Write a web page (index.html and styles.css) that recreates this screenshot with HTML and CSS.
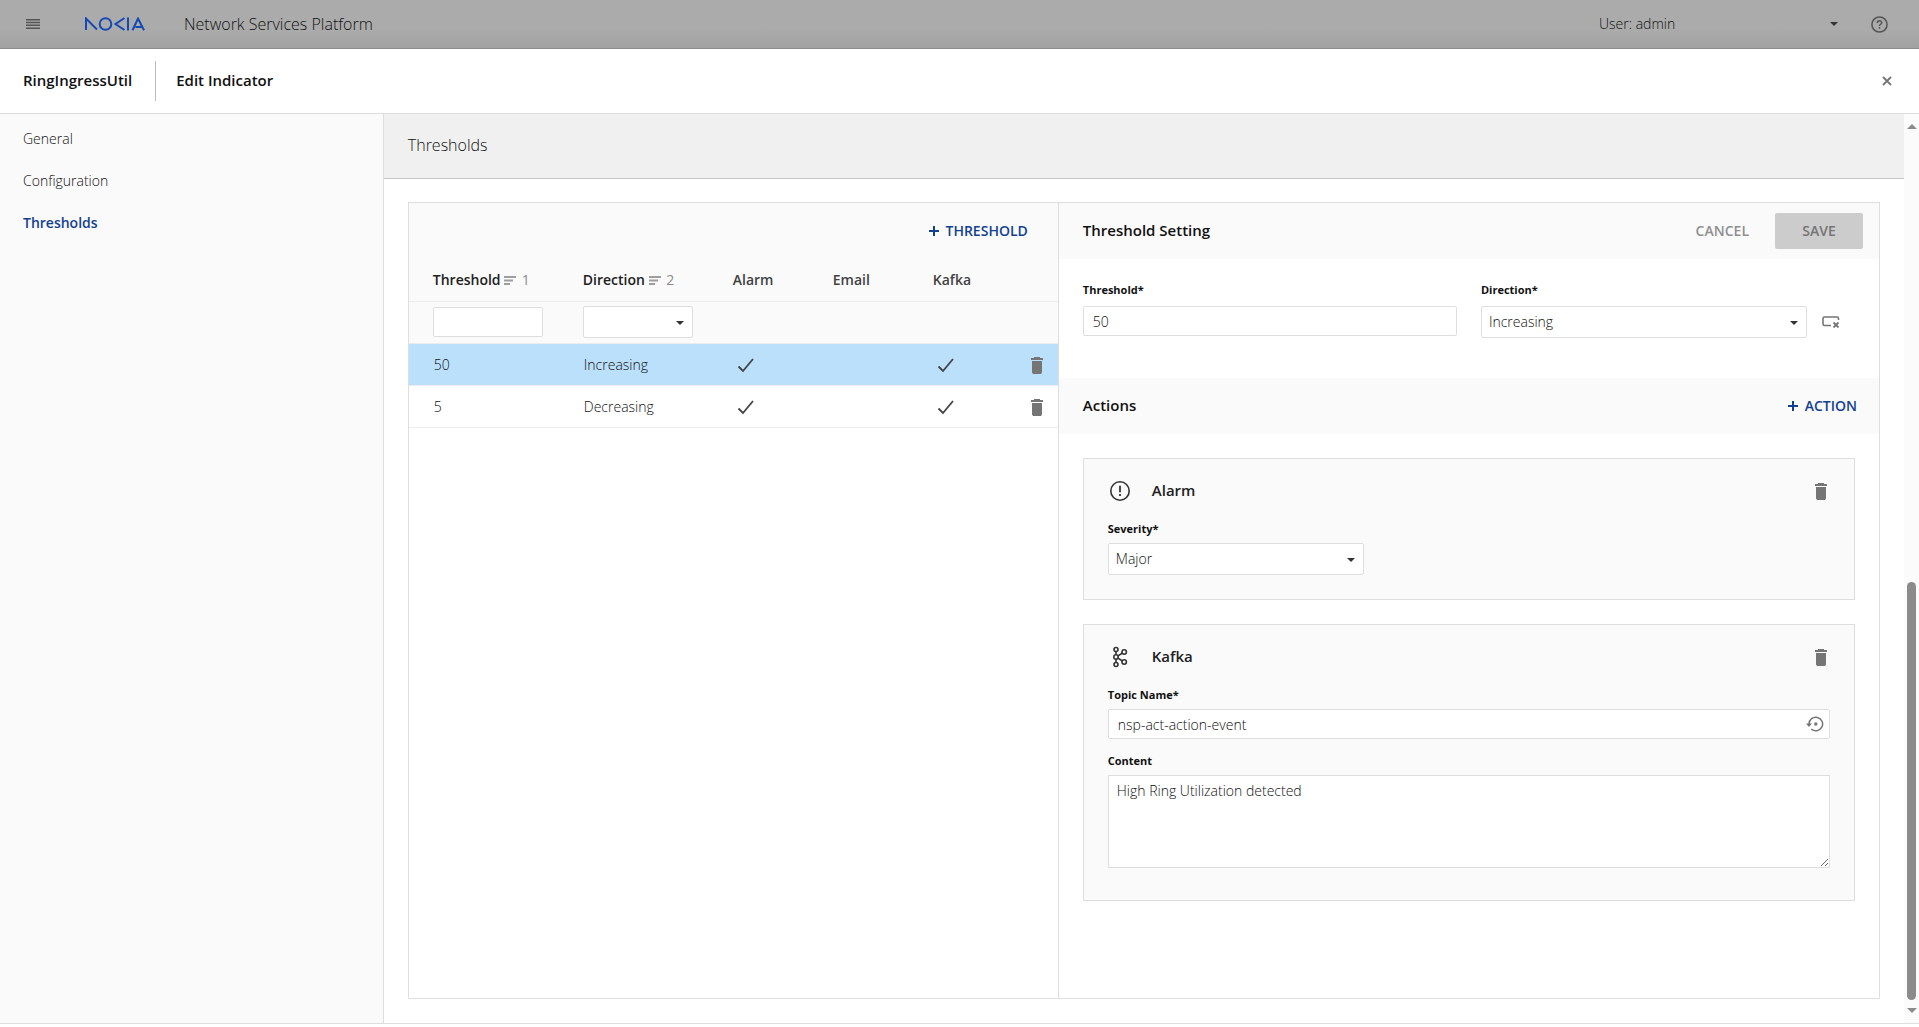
FILE: index.html
```
<!DOCTYPE html>
<html lang="en">
<head>
    <meta charset="UTF-8">
    <meta name="viewport" content="width=device-width, initial-scale=1.0">
    <title>Network Services Platform - Edit Indicator</title>
    <link rel="stylesheet" href="styles.css">
</head>
<body>
    <!-- shared icons -->
    <svg class="sprite" aria-hidden="true">
        <symbol id="icon-trash" viewBox="0 0 12 17">
            <path d="M3 0h6v1h3v2H0V1h3zM1 4h10v11.500L10 17H2l-1-1.500z"/>
        </symbol>
        <symbol id="icon-plus" viewBox="0 0 10 10">
            <path d="M4 0h2v4h4v2H6v4H4V6H0V4h4z"/>
        </symbol>
        <symbol id="icon-check" viewBox="0 0 18 16">
            <path d="M1.500 9.500l4.500 4.500L16 2" fill="none" stroke="currentColor" stroke-width="1.800"/>
        </symbol>
        <symbol id="icon-sort" viewBox="0 0 12 9">
            <path d="M0 0h12v2H0zM0 3.500h9v2H0zM0 7h6v2H0z"/>
        </symbol>
    </svg>

    <header class="topbar">
        <button class="icon-btn menu-btn" aria-label="Menu">
            <svg width="14" height="10" viewBox="0 0 14 10"><path d="M0 0h14v1.500H0zM0 2.800h14v1.500H0zM0 5.600h14v1.500H0zM0 8.400h14v1.500H0z"/></svg>
        </button>
        <svg class="logo" width="60" height="14" viewBox="0 0 60 14" role="img" aria-label="Nokia">
            <g fill="none" stroke="currentColor" stroke-width="2">
                <path d="M1 13V1.500L12 12.500"/>
                <circle cx="20.500" cy="7" r="5.800"/>
                <path d="M39.500 1L30.500 7l9 6M43 .500v13M47.500 13.200L53 1.500l6 11.700M50.500 10h7"/>
            </g>
        </svg>
        <span class="app-name">Network Services Platform</span>
        <button class="user-menu">User: admin<span class="caret"></span></button>
        <button class="icon-btn" aria-label="Help">
            <svg width="17" height="17" viewBox="0 0 17 17">
                <circle cx="8.500" cy="8.500" r="7.600" fill="none" stroke="currentColor" stroke-width="1.500"/>
                <path d="M6.300 7c0-3 4.400-3 4.400-.300 0 1.500-2.200 1.600-2.200 3.200M8.500 11v1.700" fill="none" stroke="currentColor" stroke-width="1.500"/>
            </svg>
        </button>
    </header>

    <main class="dialog">
        <div class="dialog-header">
            <h1>RingIngressUtil</h1>
            <h2>Edit Indicator</h2>
            <button class="icon-btn close-btn" aria-label="Close">
                <svg width="10" height="10" viewBox="0 0 10 10"><path d="M1 1l8 8M9 1L1 9" fill="none" stroke="currentColor" stroke-width="1.800"/></svg>
            </button>
        </div>

        <div class="dialog-body">
            <nav class="sidebar">
                <a href="#general">General</a>
                <a href="#configuration">Configuration</a>
                <a href="#thresholds" class="active">Thresholds</a>
            </nav>

            <section class="content" id="thresholds">
                <h3 class="section-title">Thresholds</h3>

                <div class="panel">
                    <div class="list">
                        <div class="toolbar list-toolbar">
                            <button class="link-btn"><svg width="10" height="10"><use href="#icon-plus"/></svg>THRESHOLD</button>
                        </div>
                        <table>
                            <thead>
                                <tr>
                                    <th class="col-wide sorted">Threshold <svg width="12" height="9"><use href="#icon-sort"/></svg> <span class="order">1</span></th>
                                    <th class="col-wide sorted">Direction <svg width="12" height="9"><use href="#icon-sort"/></svg> <span class="order">2</span></th>
                                    <th class="col">Alarm</th>
                                    <th class="col">Email</th>
                                    <th class="col">Kafka</th>
                                    <th></th>
                                </tr>
                                <tr class="filters">
                                    <td><input type="text" class="field" aria-label="Filter threshold"></td>
                                    <td>
                                        <div class="select">
                                            <select aria-label="Filter direction">
                                                <option></option>
                                                <option>Increasing</option>
                                                <option>Decreasing</option>
                                            </select>
                                        </div>
                                    </td>
                                    <td></td>
                                    <td></td>
                                    <td></td>
                                    <td></td>
                                </tr>
                            </thead>
                            <tbody>
                                <tr class="selected">
                                    <td>50</td>
                                    <td>Increasing</td>
                                    <td class="tick"><svg width="18" height="16"><use href="#icon-check"/></svg></td>
                                    <td></td>
                                    <td class="tick"><svg width="18" height="16"><use href="#icon-check"/></svg></td>
                                    <td class="remove"><button class="icon-btn" aria-label="Delete"><svg width="12" height="17"><use href="#icon-trash"/></svg></button></td>
                                </tr>
                                <tr>
                                    <td>5</td>
                                    <td>Decreasing</td>
                                    <td class="tick"><svg width="18" height="16"><use href="#icon-check"/></svg></td>
                                    <td></td>
                                    <td class="tick"><svg width="18" height="16"><use href="#icon-check"/></svg></td>
                                    <td class="remove"><button class="icon-btn" aria-label="Delete"><svg width="12" height="17"><use href="#icon-trash"/></svg></button></td>
                                </tr>
                            </tbody>
                        </table>
                    </div>

                    <form class="detail">
                        <div class="toolbar">
                            <h4>Threshold Setting</h4>
                            <button type="button" class="text-btn" disabled>CANCEL</button>
                            <button type="button" class="save-btn" disabled>SAVE</button>
                        </div>

                        <div class="setting">
                            <div class="form-group">
                                <label for="threshold">Threshold*</label>
                                <input type="text" class="field" id="threshold" value="50">
                            </div>
                            <div class="form-group">
                                <label for="direction">Direction*</label>
                                <div class="with-clear">
                                    <div class="select">
                                        <select id="direction">
                                            <option selected>Increasing</option>
                                            <option>Decreasing</option>
                                        </select>
                                    </div>
                                    <button type="button" class="icon-btn" aria-label="Clear">
                                        <svg width="18" height="12" viewBox="0 0 18 12">
                                            <path d="M9 9.500H2.500A1.500 1.500 0 0 1 1 8V2.500A1.500 1.500 0 0 1 2.500 1H15a1.500 1.500 0 0 1 1.500 1.500V4" fill="none" stroke="currentColor" stroke-width="1.600"/>
                                            <path d="M11.500 6.500l5 5M16.500 6.500l-5 5" fill="none" stroke="currentColor" stroke-width="1.800"/>
                                        </svg>
                                    </button>
                                </div>
                            </div>
                        </div>

                        <div class="toolbar actions-toolbar">
                            <h4>Actions</h4>
                            <button type="button" class="link-btn"><svg width="10" height="10"><use href="#icon-plus"/></svg>ACTION</button>
                        </div>

                        <div class="cards">
                            <div class="card">
                                <div class="card-header">
                                    <svg width="24" height="24" viewBox="0 0 24 24">
                                        <circle cx="12" cy="12" r="9.200" fill="none" stroke="currentColor" stroke-width="1.600"/>
                                        <path d="M11.100 6.800h1.800v6.400h-1.800zM11.100 15h1.800v2h-1.800z"/>
                                    </svg>
                                    <h4>Alarm</h4>
                                    <button type="button" class="icon-btn" aria-label="Delete alarm"><svg width="12" height="17"><use href="#icon-trash"/></svg></button>
                                </div>
                                <div class="form-group">
                                    <label for="severity">Severity*</label>
                                    <div class="select severity">
                                        <select id="severity">
                                            <option>Critical</option>
                                            <option selected>Major</option>
                                            <option>Minor</option>
                                        </select>
                                    </div>
                                </div>
                            </div>

                            <div class="card">
                                <div class="card-header">
                                    <svg width="24" height="24" viewBox="0 0 24 24">
                                        <g fill="none" stroke="currentColor" stroke-width="1.600">
                                            <circle cx="8" cy="4.500" r="2"/>
                                            <circle cx="8" cy="12" r="2.200"/>
                                            <circle cx="8" cy="19.500" r="2"/>
                                            <circle cx="16.200" cy="7" r="2.200"/>
                                            <circle cx="16.200" cy="17" r="2.200"/>
                                            <path d="M8 6.500v3.300M8 14.200v3.300M10 10.800L14.400 8M10 13.200l4.400 2.800"/>
                                        </g>
                                    </svg>
                                    <h4>Kafka</h4>
                                    <button type="button" class="icon-btn" aria-label="Delete kafka"><svg width="12" height="17"><use href="#icon-trash"/></svg></button>
                                </div>
                                <div class="form-group">
                                    <label for="topic">Topic Name*</label>
                                    <div class="with-reset">
                                        <input type="text" class="field" id="topic" value="nsp-act-action-event">
                                        <button type="button" class="icon-btn reset-btn" aria-label="Reset to default">
                                            <svg width="18" height="16" viewBox="0 0 18 16">
                                                <path d="M3 8a6.800 6.800 0 1 1 2.200 5" fill="none" stroke="currentColor" stroke-width="1.500"/>
                                                <path d="M0 7.500h6L3 11z"/>
                                                <circle cx="9.800" cy="8" r="1.700"/>
                                            </svg>
                                        </button>
                                    </div>
                                </div>
                                <div class="form-group">
                                    <label for="content">Content</label>
                                    <textarea id="content">High Ring Utilization detected</textarea>
                                </div>
                            </div>
                        </div>
                    </form>
                </div>
            </section>

            <div class="scrollbar" aria-hidden="true">
                <span class="arrow-up"></span>
                <span class="track"><span class="thumb"></span></span>
                <span class="arrow-down"></span>
            </div>
        </div>
    </main>
</body>
</html>
```
FILE: styles.css
```
* {
    box-sizing: border-box;
}

body {
    margin: 0;
    min-height: 100vh;
    display: flex;
    flex-direction: column;
    background: #fff;
    color: #111;
    font-family: "Open Sans", "Noto Sans", sans-serif;
    font-size: 14px;
    font-weight: 300;
    line-height: 20px;
}

h1, h2, h3, h4 {
    margin: 0;
    padding-bottom: 2px;
    font-size: 15px;
    font-weight: 600;
    line-height: 24px;
}

svg {
    display: block;
    fill: currentColor;
}

button, input, select, textarea {
    font: inherit;
    color: inherit;
}

button {
    padding: 0;
    border: none;
    background: none;
    cursor: pointer;
}

.sprite {
    position: absolute;
    width: 0;
    height: 0;
}

.icon-btn {
    display: flex;
    color: #757575;
}

/* top bar, dimmed behind the dialog */
.topbar {
    display: flex;
    align-items: center;
    height: 49px;
    padding: 0 31px 0 26px;
    background: linear-gradient(#ababab 60%, #a2a2a2);
    border-bottom: 1px solid #8c8c8c;
}

.topbar .icon-btn {
    color: #555;
}

.logo {
    margin-left: 45px;
    color: #1549b5;
}

.app-name {
    margin-left: 39px;
    font-size: 16px;
}

.user-menu {
    display: flex;
    align-items: center;
    justify-content: space-between;
    width: 239px;
    margin: 0 33px 0 auto;
}

.caret,
.select::after {
    content: "";
    border: 4px solid transparent;
    border-top-color: #333;
    border-bottom-width: 0;
}

/* dialog */
.dialog {
    flex: 1;
    display: flex;
    flex-direction: column;
    padding-bottom: 3px;
}

.dialog-header {
    display: flex;
    align-items: center;
    height: 65px;
    padding: 0 27px 0 23px;
    border-bottom: 1px solid #dedede;
}

.dialog-header h2 {
    margin-left: 23px;
    padding: 7px 0 9px 20px;
    border-left: 1px solid #bebebe;
}

.close-btn {
    margin-left: auto;
}

.dialog-body {
    flex: 1;
    display: flex;
    border-bottom: 1px solid #dedede;
}

.sidebar {
    flex: 0 0 20%;
    display: flex;
    flex-direction: column;
    gap: 22px;
    padding: 15px 23px;
    background: #fafafa;
    border-right: 1px solid #dedede;
}

.sidebar a {
    color: #111;
    text-decoration: none;
}

.sidebar a.active {
    color: #124191;
    font-weight: 600;
}

.content {
    flex: 1;
    display: flex;
    flex-direction: column;
}

.section-title {
    padding: 19px 24px 21px;
    background: #f0f0f0;
    border-bottom: 1px solid #c4c4c4;
    font-weight: 300;
    font-size: 16px;
}

.panel {
    flex: 1;
    display: flex;
    margin: 23px 24px 24px;
    border: 1px solid #dedede;
}

.toolbar {
    display: flex;
    align-items: center;
    height: 56px;
    padding: 0 16px 0 24px;
    background: #fafafa;
}

.toolbar h4 {
    margin-right: auto;
}

/* threshold list */
.list {
    flex: 0 0 650px;
    border-right: 1px solid #dedede;
}

.list-toolbar {
    justify-content: flex-end;
    padding-right: 30px;
}

.link-btn {
    display: flex;
    align-items: center;
    gap: 7px;
    color: #124191;
    font-weight: 600;
}

.actions-toolbar {
    padding-right: 22px;
}

table {
    width: 100%;
    border-collapse: collapse;
    table-layout: fixed;
}

th, td {
    height: 42px;
    padding: 0 16px 0 24px;
    border-bottom: 1px solid #ececec;
    text-align: left;
}

thead {
    background: #fafafa;
}

th {
    color: #424242;
    font-weight: 600;
    white-space: nowrap;
}

th svg {
    display: inline-block;
    color: #9e9e9e;
}

.col-wide {
    width: 150px;
}

.col {
    width: 100px;
}

.sorted {
    color: #212121;
}

.order {
    margin-left: 2px;
    color: #8c8c8c;
    font-weight: 400;
}

tbody td {
    padding: 2px 16px 0 25px;
}

.selected {
    background: #bbe0fc;
}

tbody .tick {
    padding-left: 28px;
    color: #424242;
}

tbody .remove {
    padding: 2px 0 0 22px;
}

/* fields */
.field,
.select select,
textarea {
    display: block;
    width: 100%;
    background: #fff;
    border: 1px solid #dedede;
    border-radius: 2px;
}

.field {
    height: 30px;
    padding: 0 9px;
}

.select {
    position: relative;
}

.select select {
    appearance: none;
    height: 32px;
    padding: 0 7px;
}

.select::after {
    position: absolute;
    right: 9px;
    top: 15px;
    pointer-events: none;
}

textarea {
    height: 93px;
    padding: 5px 8px;
    border-radius: 0;
}

label {
    display: block;
    margin-bottom: 6px;
    font-size: 11px;
    font-weight: 700;
    line-height: 16px;
}

/* threshold setting */
.detail {
    flex: 1;
}

.setting {
    display: grid;
    grid-template-columns: 374fr 359fr;
    gap: 24px;
    height: 119px;
    padding: 23px 39px 0 24px;
}

.setting label {
    margin-bottom: 8px;
}

.with-clear {
    display: flex;
    align-items: center;
    gap: 15px;
}

.with-clear .select {
    flex: 1;
}

.text-btn {
    padding: 0 26px;
    color: #8f8f8f;
    font-weight: 600;
}

.save-btn {
    width: 88px;
    height: 36px;
    background: #ccc;
    border-radius: 2px;
    color: #757575;
    font-weight: 600;
}

/* actions */
.cards {
    display: flex;
    flex-direction: column;
    gap: 24px;
    padding: 24px;
}

.card {
    padding: 19px 24px 24px;
    background: #fafafa;
    border: 1px solid #dedede;
}

.card-header {
    display: flex;
    align-items: center;
    gap: 20px;
    margin-bottom: 17px;
    padding-right: 3px;
    color: #333;
}

.card-header h4 {
    flex: 1;
    color: #212121;
}

.card .form-group + .form-group {
    margin: 14px 0 8px;
}

.severity {
    width: 256px;
}

.with-reset {
    position: relative;
}

.reset-btn {
    position: absolute;
    right: 6px;
    top: 7px;
}

/* scrollbar */
.scrollbar {
    display: flex;
    flex-direction: column;
    align-items: center;
    width: 15px;
    padding: 10px 0;
    background: #fbfbfb;
}

.arrow-up,
.arrow-down {
    border: 5px solid transparent;
}

.arrow-up {
    border-top-width: 0;
    border-bottom-color: #8b8b8b;
}

.arrow-down {
    border-bottom-width: 0;
    border-top-color: #8b8b8b;
}

.track {
    flex: 1;
    display: flex;
    align-items: flex-end;
    padding-bottom: 8px;
}

.thumb {
    width: 9px;
    height: 48%;
    background: #8b8b8b;
    border-radius: 5px;
}
```
